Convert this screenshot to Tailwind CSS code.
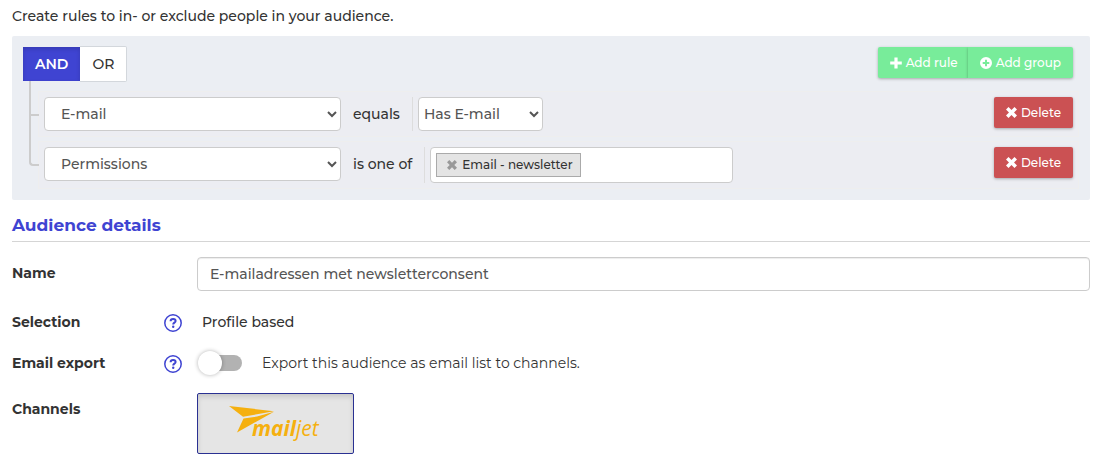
<!DOCTYPE html>
<html lang="en">

<head>
    <meta charset="UTF-8" />
    <title>Audience</title>
    <meta name="viewport" content="width=device-width, initial-scale=1.0" />
    <script src="https://cdn.jsdelivr.net/npm/@tailwindcss/browser@4"></script>
</head>

<body class="bg-white px-3 py-1.5 font-[Montserrat,Inter,sans-serif] text-sm font-medium text-[#333]">
    <p class="mb-2.5">Create rules to in- or exclude people in your audience.</p>

    <!-- Rule builder -->
    <section class="rounded-xs bg-[#ebeef3] px-[11px] pt-2.5 pb-[11px]">
        <div class="flex items-start justify-between pr-1.5">
            <div class="flex">
                <label class="flex h-9 cursor-pointer items-center border-y border-[#ebeef3] bg-[#3f44d2] px-3 font-semibold text-white shadow-[inset_0_2px_4px_rgba(0,0,0,0.15)]">
                    <input type="radio" name="condition" class="sr-only" checked />AND
                </label>
                <label class="flex h-9 cursor-pointer items-center rounded-r-xs border border-l-0 border-[#d3d7dc] bg-white px-3">
                    <input type="radio" name="condition" class="sr-only" />OR
                </label>
            </div>
            <div class="mt-px flex text-xs font-medium text-white">
                <button class="flex h-[31px] items-center gap-1 rounded-l-xs bg-[#78ec9a] px-2.5 pl-3 shadow-[0_1px_3px_rgba(0,0,0,0.3)]">
                    <svg class="size-3" viewBox="0 0 12 12" fill="currentColor"><path d="M4.400 0.500h3.200v3.900h4.200v3.200H7.600v3.900H4.400V7.600H0.200V4.400h4.200z" /></svg>
                    Add rule
                </button>
                <button class="flex h-[31px] items-center gap-1 rounded-r-xs bg-[#78ec9a] px-3 shadow-[0_1px_3px_rgba(0,0,0,0.3)]">
                    <svg class="size-3" viewBox="0 0 12 12" fill="currentColor" fill-rule="evenodd"><path d="M6 0a6 6 0 1 1 0 12A6 6 0 0 1 6 0zM5 2.700v2.300H2.700v2H5v2.300h2V7h2.300V5H7V2.700z" /></svg>
                    Add group
                </button>
            </div>
        </div>

        <ul class="mt-[9px] ml-[15px] space-y-1">
            <li class="relative flex items-start border border-[#eeeeee] bg-[#ecedf2] p-[5px] before:absolute before:-top-[11px] before:-left-[10px] before:h-[35px] before:w-2.5 before:border-b-2 before:border-l-2 before:border-[#ccc]">
                <select aria-label="Field" class="h-[34px] w-[297px] rounded-sm border border-[#ccc] bg-white px-3 text-[#555]">
                    <option>E-mail</option>
                </select>
                <div class="ml-3 flex h-[34px] items-center pr-3">equals</div>
                <div class="border-l border-[#ddd] pl-[5px]">
                    <select aria-label="Value" class="h-[34px] w-[125px] rounded-sm border border-[#ccc] bg-white px-px text-[#555]">
                        <option>Has E-mail</option>
                    </select>
                </div>
                <button class="ml-auto flex h-[31px] items-center gap-1 rounded-xs bg-[#cb5153] px-3 text-xs font-medium text-white shadow-[0_1px_3px_rgba(0,0,0,0.3)]">
                    <svg class="size-[11px]" viewBox="0 0 10 10" fill="currentColor"><path d="M2.300 0L5 2.700 7.700 0 10 2.300 7.300 5 10 7.700 7.700 10 5 7.300 2.300 10 0 7.700 2.700 5 0 2.300z" /></svg>
                    Delete
                </button>
            </li>
            <li class="relative flex items-start border border-[#eeeeee] bg-[#ecedf2] p-[5px] before:absolute before:-top-[28px] before:-left-[10px] before:h-[52px] before:w-2.5 before:rounded-bl-sm before:border-b-2 before:border-l-2 before:border-[#ccc]">
                <select aria-label="Field" class="h-[34px] w-[297px] rounded-sm border border-[#ccc] bg-white px-3 text-[#555]">
                    <option>Permissions</option>
                </select>
                <div class="ml-3 flex h-[34px] items-center pr-3">is one of</div>
                <div class="border-l border-[#ddd] pl-[5px]">
                    <div class="flex h-9 w-[303px] items-center rounded-sm border border-[#ccc] bg-white px-[5px]">
                        <span class="flex h-6 items-center gap-[5px] border border-[#aaa] bg-[#e4e4e4] pr-[7px] pl-2.5 text-xs">
                            <button aria-label="Remove" class="text-[#999]">
                                <svg class="size-2.5" viewBox="0 0 10 10" fill="currentColor"><path d="M2.300 0L5 2.700 7.700 0 10 2.300 7.300 5 10 7.700 7.700 10 5 7.300 2.300 10 0 7.700 2.700 5 0 2.300z" /></svg>
                            </button>
                            Email - newsletter
                        </span>
                    </div>
                </div>
                <button class="ml-auto flex h-[31px] items-center gap-1 rounded-xs bg-[#cb5153] px-3 text-xs font-medium text-white shadow-[0_1px_3px_rgba(0,0,0,0.3)]">
                    <svg class="size-[11px]" viewBox="0 0 10 10" fill="currentColor"><path d="M2.300 0L5 2.700 7.700 0 10 2.300 7.300 5 10 7.700 7.700 10 5 7.300 2.300 10 0 7.700 2.700 5 0 2.300z" /></svg>
                    Delete
                </button>
            </li>
        </ul>
    </section>

    <!-- Details -->
    <h2 class="mt-[13px] border-b border-[#d5d5d5] pb-1 text-[17px] leading-6 font-bold text-[#3f44d2]">Audience details</h2>

    <form class="mt-[15px]">
        <div class="flex">
            <label for="name" class="w-[185px] pt-1.5 font-bold">Name</label>
            <input id="name" type="text" value="E-mailadressen met newsletterconsent"
                class="h-[34px] min-w-0 flex-1 rounded-sm border border-[#ccc] bg-white px-3 text-[#555] shadow-[inset_0_1px_1px_rgba(0,0,0,0.075)]" />
        </div>
        <div class="mt-[19px] flex h-6 items-center">
            <span class="w-[151px] font-bold">Selection</span>
            <svg class="mr-[19px] size-5 text-[#3f44d2]" viewBox="0 0 20 20" fill="none" stroke="currentColor"><circle cx="10" cy="11" r="8.200" stroke-width="1.500" /><path d="M7.600 9.200c0-1.500 1.100-2.300 2.500-2.300s2.500.8 2.500 2c0 1.700-2.400 1.800-2.400 3.500" stroke-width="2" /><circle cx="10.200" cy="14.700" r="1.200" fill="currentColor" stroke="none" /></svg>
            <span>Profile based</span>
        </div>
        <div class="mt-[17px] flex h-6 items-center">
            <label for="export" class="w-[151px] font-bold">Email export</label>
            <svg class="mr-3.5 size-5 text-[#3f44d2]" viewBox="0 0 20 20" fill="none" stroke="currentColor"><circle cx="10" cy="11" r="8.200" stroke-width="1.500" /><path d="M7.600 9.200c0-1.500 1.100-2.300 2.500-2.300s2.500.8 2.500 2c0 1.700-2.400 1.800-2.400 3.500" stroke-width="2" /><circle cx="10.200" cy="14.700" r="1.200" fill="currentColor" stroke="none" /></svg>
            <input id="export" type="checkbox"
                class="relative ml-[5px] h-4 w-10 appearance-none rounded-full bg-[#b2b2b2] before:absolute before:-top-1 before:-left-1 before:size-6 before:rounded-full before:bg-white before:shadow-[0_0_4px_rgba(0,0,0,0.3)]" />
            <span class="ml-5 font-normal">Export this audience as email list to channels.</span>
        </div>
        <div class="mt-[18px] flex items-start">
            <span class="w-[185px] pt-1.5 font-bold">Channels</span>
            <button type="button" aria-label="mailjet" class="flex h-[61px] w-[157px] items-center justify-center rounded-xs border border-[#2a3192] bg-[#e5e5e5] shadow-[inset_0_3px_5px_rgba(0,0,0,0.125)]">
                <svg class="h-[42px] w-24" viewBox="0 0 96 42" fill="#f5b00f">
                    <path d="M1 3L46 8.200 15 13.700zM46 8.800L9 29.500 15.500 15.500 29 13.500z" />
                    <text x="24" y="33" font-family="Open Sans, sans-serif" font-size="21" font-style="italic" font-weight="700">mail<tspan font-weight="400">jet</tspan></text>
                </svg>
            </button>
        </div>
    </form>
</body>

</html>
